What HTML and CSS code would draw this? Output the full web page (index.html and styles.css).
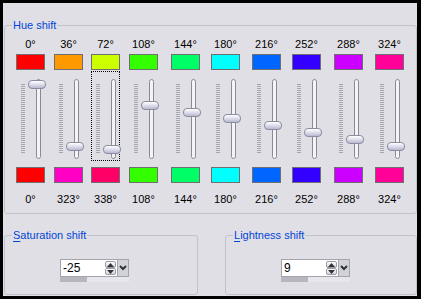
FILE: index.html
```html
<!DOCTYPE html>
<html lang="en">
<head>
    <meta charset="UTF-8">
    <title>Hue shift</title>
    <link rel="stylesheet" href="styles.css">
</head>
<body>

    <div class="window">
        <!-- Hue shift -->
        <fieldset class="group hue-group">
            <legend>Hue shift</legend>
            <div class="hue-grid">
                <div class="col">
                    <div class="deg">0°</div>
                    <div class="swatch" style="background:#ff0000"></div>
                    <div class="slider"><span class="ticks"></span><span class="track"></span><span class="thumb" style="top:8px"></span></div>
                    <div class="swatch" style="background:#ff0000"></div>
                    <div class="deg">0°</div>
                </div>
                <div class="col">
                    <div class="deg">36°</div>
                    <div class="swatch" style="background:#ff9900"></div>
                    <div class="slider"><span class="ticks"></span><span class="track"></span><span class="thumb" style="top:70px"></span></div>
                    <div class="swatch" style="background:#ff00c4"></div>
                    <div class="deg">323°</div>
                </div>
                <div class="col">
                    <div class="deg">72°</div>
                    <div class="swatch" style="background:#ccff00"></div>
                    <div class="slider focused"><span class="ticks"></span><span class="track"></span><span class="thumb" style="top:73px"></span></div>
                    <div class="swatch" style="background:#ff0066"></div>
                    <div class="deg">338°</div>
                </div>
                <div class="col">
                    <div class="deg">108°</div>
                    <div class="swatch" style="background:#33ff00"></div>
                    <div class="slider"><span class="ticks"></span><span class="track"></span><span class="thumb" style="top:29px"></span></div>
                    <div class="swatch" style="background:#33ff00"></div>
                    <div class="deg">108°</div>
                </div>
                <div class="col">
                    <div class="deg">144°</div>
                    <div class="swatch" style="background:#00ff66"></div>
                    <div class="slider"><span class="ticks"></span><span class="track"></span><span class="thumb" style="top:36px"></span></div>
                    <div class="swatch" style="background:#00ff66"></div>
                    <div class="deg">144°</div>
                </div>
                <div class="col">
                    <div class="deg">180°</div>
                    <div class="swatch" style="background:#00ffff"></div>
                    <div class="slider"><span class="ticks"></span><span class="track"></span><span class="thumb" style="top:42px"></span></div>
                    <div class="swatch" style="background:#00ffff"></div>
                    <div class="deg">180°</div>
                </div>
                <div class="col">
                    <div class="deg">216°</div>
                    <div class="swatch" style="background:#0066ff"></div>
                    <div class="slider"><span class="ticks"></span><span class="track"></span><span class="thumb" style="top:49px"></span></div>
                    <div class="swatch" style="background:#0066ff"></div>
                    <div class="deg">216°</div>
                </div>
                <div class="col">
                    <div class="deg">252°</div>
                    <div class="swatch" style="background:#3300ff"></div>
                    <div class="slider"><span class="ticks"></span><span class="track"></span><span class="thumb" style="top:56px"></span></div>
                    <div class="swatch" style="background:#3300ff"></div>
                    <div class="deg">252°</div>
                </div>
                <div class="col">
                    <div class="deg">288°</div>
                    <div class="swatch" style="background:#cc00ff"></div>
                    <div class="slider"><span class="ticks"></span><span class="track"></span><span class="thumb" style="top:63px"></span></div>
                    <div class="swatch" style="background:#cc00ff"></div>
                    <div class="deg">288°</div>
                </div>
                <div class="col">
                    <div class="deg">324°</div>
                    <div class="swatch" style="background:#ff0099"></div>
                    <div class="slider"><span class="ticks"></span><span class="track"></span><span class="thumb" style="top:70px"></span></div>
                    <div class="swatch" style="background:#ff0099"></div>
                    <div class="deg">324°</div>
                </div>
            </div>
        </fieldset>

        <!-- Saturation / Lightness -->
        <div class="bottom-row">
            <fieldset class="group small-group sat-group">
                <legend><u>S</u>aturation shift</legend>
                <div class="spin">
                    <div class="spin-field">
                        <span class="spin-value">-25</span>
                        <span class="spin-arrows">
                            <span class="arrow"><svg width="7" height="4" viewBox="0 0 7 4"><path d="M0 4 L3.5 0 L7 4 Z" fill="#333"/></svg></span>
                            <span class="arrow"><svg width="7" height="4" viewBox="0 0 7 4"><path d="M0 0 L3.5 4 L7 0 Z" fill="#333"/></svg></span>
                        </span>
                        <span class="spin-drop"><svg width="8" height="6" viewBox="0 0 8 6"><path d="M1 1 L4 4 L7 1" fill="none" stroke="#333" stroke-width="2"/></svg></span>
                    </div>
                    <div class="spin-scroll"><span class="spin-scroll-thumb"></span></div>
                </div>
            </fieldset>
            <fieldset class="group small-group light-group">
                <legend><u>L</u>ightness shift</legend>
                <div class="spin">
                    <div class="spin-field">
                        <span class="spin-value">9</span>
                        <span class="spin-arrows">
                            <span class="arrow"><svg width="7" height="4" viewBox="0 0 7 4"><path d="M0 4 L3.5 0 L7 4 Z" fill="#333"/></svg></span>
                            <span class="arrow"><svg width="7" height="4" viewBox="0 0 7 4"><path d="M0 0 L3.5 4 L7 0 Z" fill="#333"/></svg></span>
                        </span>
                        <span class="spin-drop"><svg width="8" height="6" viewBox="0 0 8 6"><path d="M1 1 L4 4 L7 1" fill="none" stroke="#333" stroke-width="2"/></svg></span>
                    </div>
                    <div class="spin-scroll"><span class="spin-scroll-thumb"></span></div>
                </div>
            </fieldset>
        </div>
    </div>

</body>
</html>
```

FILE: styles.css
```css
/* General Reset */
* { margin: 0; padding: 0; box-sizing: border-box; }
body { background-color: #000; font-family: 'Liberation Sans', Arial, sans-serif; font-size: 11px; color: #000; }

/* Dialog window */
.window { width: 414px; height: 293px; margin: 3px 0 0 3px; background-color: #e0dfe6; overflow: hidden; }

/* Group boxes */
.group { border: 1px solid #c2c2cc; border-radius: 3px; min-inline-size: 0; }
.group legend { margin-left: 7px; padding: 0 1px; line-height: 13px; color: #0046d5; }
.group legend u { text-decoration-thickness: 1px; text-underline-offset: 2px; }

.hue-group { width: 413px; margin: 16px 0 0 1px; padding: 6px 0 7px 0; }
.hue-grid { display: grid; grid-template-columns: 38px 37px 38px 42px 40px 41px 40px 42px 41px 29px; padding-left: 11px; }
.col { display: flex; flex-direction: column; width: 29px; }
.deg { height: 13px; line-height: 13px; text-align: center; white-space: nowrap; }
.col .deg:last-child { margin-top: 10px; }

.swatch { height: 16px; border: 1px solid #6f6f6f; margin-top: 3px; }
.slider + .swatch { margin-top: 6px; }

/* Vertical trackbar */
.slider { position: relative; display: flex; height: 90px; margin-top: 1px; padding-left: 4px; gap: 11px; border: 1px dotted transparent; }
.slider.focused { border-color: #000; }
.ticks { width: 4px; height: 70px; margin-top: 12px; background: repeating-linear-gradient(#a6a6ae 0 1px, transparent 1px 2px); }
.track { width: 5px; height: 80px; margin-top: 7px; border: 1px solid #8a8a92; border-radius: 3px; background-color: #f4f4f8; }
.thumb { position: absolute; left: 11px; width: 18px; height: 9px; border: 1px solid #8c8ca0; border-radius: 4px; background: linear-gradient(#ffffff, #d6d6e8 60%, #b8b8d0); }

/* Bottom group boxes */
.bottom-row { display: flex; gap: 27px; margin: 15px 0 0 1px; }
.small-group { height: 66px; padding: 17px 0 0 0; }
.sat-group { width: 194px; }
.light-group { width: 192px; }

/* Spin edit */
.spin { width: 69px; margin-left: 55px; }
.spin-field { display: flex; height: 18px; border: 1px solid #a4a4ac; background-color: #fff; }
.spin-value { flex: 1; padding-left: 2px; font-size: 12px; line-height: 16px; }
.spin-arrows { display: flex; flex-direction: column; width: 11px; padding: 1px 0; }
.arrow { flex: 1; display: flex; align-items: center; justify-content: center; border: 1px solid #9a9aa6; border-radius: 2px; background: linear-gradient(#ffffff, #d4d4de); }
.spin-drop { display: flex; align-items: center; justify-content: center; width: 11px; margin-left: 1px; border-left: 1px solid #a4a4ac; background-color: #d2d2da; }
.spin-scroll { display: flex; height: 5px; background-color: #e6e6ec; }
.spin-scroll-thumb { width: 27px; background-color: #b6b6be; }
```
